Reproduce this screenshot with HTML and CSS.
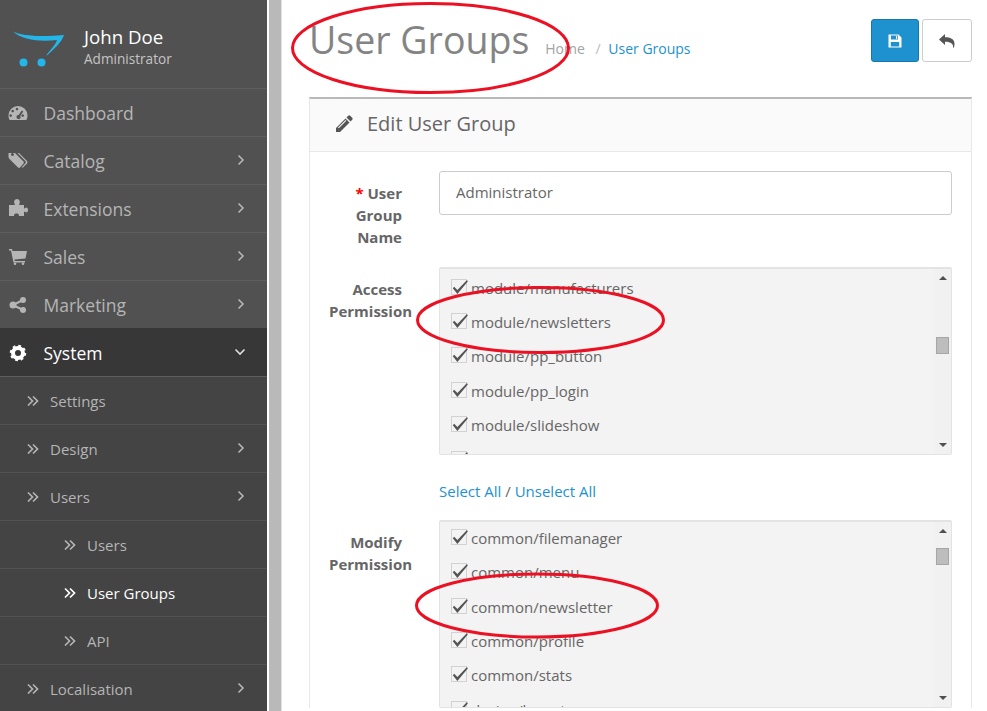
FILE: index.html
```html
<!DOCTYPE html>
<html lang="en">
<head>
    <meta charset="UTF-8">
    <title>User Groups</title>
    <link rel="stylesheet" href="styles.css">
</head>
<body>
    <svg class="sprites" width="0" height="0">
        <symbol id="chev-right" viewBox="0 0 10 12"><path d="M2.5 1.5 7 6l-4.5 4.5" fill="none" stroke="currentColor" stroke-width="1.6"/></symbol>
        <symbol id="chev-down" viewBox="0 0 12 10"><path d="M1.5 2.5 6 7l4.5-4.5" fill="none" stroke="currentColor" stroke-width="1.6"/></symbol>
        <symbol id="angles" viewBox="0 0 12 12"><path d="M1 1.5 5.500 6 1 10.500M6 1.500 10.500 6 6 10.500" fill="none" stroke="currentColor" stroke-width="1.7"/></symbol>
        <symbol id="tick" viewBox="0 -2 18 18" overflow="visible"><path d="M1.800 7.200 3.200 5.800 6.400 9 16-1 16.800.5 6.400 13z" fill="#555"/></symbol>
    </svg>

    <div class="page">
        <aside class="sidebar">
            <div class="profile">
                <svg class="logo" width="52" height="40" viewBox="12 28 52 40">
                    <path d="M13 31.500C22 36 40 37 64 35 62 42 54 49 47 55.500L46.500 55C51 49 56 44 57 40 40 42 22 40 13 31.500Z" fill="#23b6ea"/>
                    <circle cx="23.500" cy="62.500" r="4" fill="#23b6ea"/>
                    <circle cx="41.500" cy="62.500" r="4" fill="#23b6ea"/>
                </svg>
                <div>
                    <div class="profile-name">John Doe</div>
                    <div class="profile-role">Administrator</div>
                </div>
            </div>
            <nav>
                <a class="nav-item">
                    <svg class="nav-icon" viewBox="0 0 20 16"><path fill-rule="evenodd" d="M10 1a9.500 9.500 0 0 1 9.500 9.500c0 1.800-.4 3.500-1.300 4.500H1.800C.9 14 .5 12.300.5 10.500A9.500 9.500 0 0 1 10 1zM4 10.500a1.300 1.300 0 1 0 0 .1zM6 6a1.300 1.300 0 1 0 0 .1zM10.300 4a1.300 1.300 0 1 0 0 .1zM16 10.500a1.300 1.300 0 1 0 0 .1zM15.300 6.500 13.800 5.500 10.600 10a2 2 0 1 0 1.600 1z" fill="currentColor"/></svg>
                    <span>Dashboard</span>
                </a>
                <a class="nav-item">
                    <svg class="nav-icon" viewBox="0 0 20 16"><path fill-rule="evenodd" d="M.5 0h6.500l8.500 8.500a1.500 1.500 0 0 1 0 2L12 14.500a1.500 1.500 0 0 1-2 0L1.500 6C.8 5.300.5 4.500.5 3.700zM4.500 3a1.500 1.500 0 1 0-.1 0z" fill="currentColor"/><path d="M9.500 0h1.500l8 8a2 2 0 0 1 0 2.500L15 14.500h-1.500l4-4.500c.5-.6.5-1.200 0-1.700z" fill="currentColor"/></svg>
                    <span>Catalog</span>
                    <svg class="nav-arrow"><use href="#chev-right"/></svg>
                </a>
                <a class="nav-item">
                    <svg class="nav-icon" viewBox="0 0 20 16"><path d="M1 4H6.500C7 4 7 3 6.500 2.500 5.500 1 6.500-2 9-2s3.500 3 2.500 4.500C11 3 11 4 11.500 4H16V7C16 7.500 17 7.500 17.500 7 18 6 20 6.500 20 9s-2 3-2.500 2C17 10.500 16 10.500 16 11v4H11C11 13 10 12.500 8.500 12.500S6 13 6 15H1z" fill="currentColor"/></svg>
                    <span>Extensions</span>
                    <svg class="nav-arrow"><use href="#chev-right"/></svg>
                </a>
                <a class="nav-item">
                    <svg class="nav-icon" viewBox="0 0 20 16"><path d="M1 0h3l.5 2H19l-1.500 7.500-11 1 .3 1.500H17v1.500H5.500L3 1.500H1z" fill="currentColor"/><circle cx="7" cy="14.700" r="1.300" fill="currentColor"/><circle cx="15" cy="14.700" r="1.300" fill="currentColor"/></svg>
                    <span>Sales</span>
                    <svg class="nav-arrow"><use href="#chev-right"/></svg>
                </a>
                <a class="nav-item">
                    <svg class="nav-icon" viewBox="0 0 20 16"><circle cx="5" cy="8" r="3.500" fill="currentColor"/><circle cx="15" cy="3" r="3" fill="currentColor"/><circle cx="15" cy="13" r="3" fill="currentColor"/><path d="M5 8 15 3M5 8l10 5" stroke="currentColor" stroke-width="2"/></svg>
                    <span>Marketing</span>
                    <svg class="nav-arrow"><use href="#chev-right"/></svg>
                </a>
                <a class="nav-item nav-open">
                    <svg class="nav-icon" viewBox="0 0 20 16"><circle cx="10" cy="8" r="5" fill="none" stroke="currentColor" stroke-width="4"/><circle cx="10" cy="8" r="7" fill="none" stroke="currentColor" stroke-width="2.500" stroke-dasharray="2.700 2.800"/></svg>
                    <span>System</span>
                    <svg class="nav-arrow nav-arrow-down"><use href="#chev-down"/></svg>
                </a>
                <a class="nav-sub">
                    <svg class="angles"><use href="#angles"/></svg>
                    <span>Settings</span>
                </a>
                <a class="nav-sub">
                    <svg class="angles"><use href="#angles"/></svg>
                    <span>Design</span>
                    <svg class="nav-arrow"><use href="#chev-right"/></svg>
                </a>
                <a class="nav-sub">
                    <svg class="angles"><use href="#angles"/></svg>
                    <span>Users</span>
                    <svg class="nav-arrow"><use href="#chev-right"/></svg>
                </a>
                <a class="nav-sub nav-deep">
                    <svg class="angles"><use href="#angles"/></svg>
                    <span>Users</span>
                </a>
                <a class="nav-sub nav-deep nav-current">
                    <svg class="angles"><use href="#angles"/></svg>
                    <span>User Groups</span>
                </a>
                <a class="nav-sub nav-deep">
                    <svg class="angles"><use href="#angles"/></svg>
                    <span>API</span>
                </a>
                <a class="nav-sub">
                    <svg class="angles"><use href="#angles"/></svg>
                    <span>Localisation</span>
                    <svg class="nav-arrow"><use href="#chev-right"/></svg>
                </a>
            </nav>
        </aside>

        <div class="gutter"></div>

        <main class="content">
            <header class="page-header">
                <h1>User Groups</h1>
                <div class="breadcrumb">
                    <a class="crumb-home">Home</a>
                    <span class="crumb-sep">/</span>
                    <a class="link">User Groups</a>
                </div>
                <div class="actions">
                    <button class="btn btn-save">
                        <svg width="14" height="14" viewBox="0 0 14 14"><path fill-rule="evenodd" d="M.5.500h10L13.500 3.500v10H.500zM3 1.500v4h7v-4zM8 2h1.200v3H8zM2.800 8v4.500h8.400V8z" fill="#fff"/></svg>
                    </button>
                    <button class="btn btn-back">
                        <svg width="16" height="14" viewBox="0 0 16 14"><path d="M0 5.500 6 0v3.300c5 0 9.500 1.500 9.500 7 0 1.300-.3 2.500-.8 3.500h-.6c.4-3.500-1.800-6-8.100-6V11z" fill="#555"/></svg>
                    </button>
                </div>
            </header>

            <section class="panel">
                <div class="panel-heading">
                    <svg width="18" height="18" viewBox="0 0 18 18"><path d="M13.200.8a1.500 1.500 0 0 1 2 0l2 2a1.500 1.500 0 0 1 0 2L15.500 6.500l-4-4zM10.500 3.500l4 4L5 17H1v-4zM3 12.500l.8.800 7.500-7.500-.8-.8z" fill="#555" fill-rule="evenodd"/></svg>
                    <h3>Edit User Group</h3>
                </div>
                <div class="panel-body">
                    <div class="form-row">
                        <label class="form-label">
                            <span class="label-line"><span class="required">*</span> User</span>
                            <span class="label-line">Group</span>
                            <span class="label-line">Name</span>
                        </label>
                        <div class="form-control">Administrator</div>
                    </div>

                    <div class="form-row">
                        <label class="form-label">
                            <span class="label-line">Access</span>
                            <span>Permission</span>
                        </label>
                        <div class="field">
                            <div class="well">
                                <ul class="perm-list perm-access">
                                    <li><span class="check"><svg width="18" height="18"><use href="#tick"/></svg></span>module/manufacturers</li>
                                    <li><span class="check"><svg width="18" height="18"><use href="#tick"/></svg></span>module/newsletters</li>
                                    <li><span class="check"><svg width="18" height="18"><use href="#tick"/></svg></span>module/pp_button</li>
                                    <li><span class="check"><svg width="18" height="18"><use href="#tick"/></svg></span>module/pp_login</li>
                                    <li><span class="check"><svg width="18" height="18"><use href="#tick"/></svg></span>module/slideshow</li>
                                    <li><span class="check"><svg width="18" height="18"><use href="#tick"/></svg></span>module/special</li>
                                </ul>
                                <div class="scrollbar">
                                    <i class="arrow-up"></i>
                                    <i class="thumb thumb-access"></i>
                                    <i class="arrow-down"></i>
                                </div>
                            </div>
                            <div class="select-links"><a class="link">Select All</a> / <a class="link">Unselect All</a></div>
                        </div>
                    </div>

                    <div class="form-row">
                        <label class="form-label">
                            <span class="label-line">Modify</span>
                            <span>Permission</span>
                        </label>
                        <div class="field">
                            <div class="well">
                                <ul class="perm-list perm-modify">
                                    <li><span class="check"><svg width="18" height="18"><use href="#tick"/></svg></span>common/filemanager</li>
                                    <li><span class="check"><svg width="18" height="18"><use href="#tick"/></svg></span>common/menu</li>
                                    <li><span class="check"><svg width="18" height="18"><use href="#tick"/></svg></span>common/newsletter</li>
                                    <li><span class="check"><svg width="18" height="18"><use href="#tick"/></svg></span>common/profile</li>
                                    <li><span class="check"><svg width="18" height="18"><use href="#tick"/></svg></span>common/stats</li>
                                    <li><span class="check"><svg width="18" height="18"><use href="#tick"/></svg></span>design/layout</li>
                                </ul>
                                <div class="scrollbar">
                                    <i class="arrow-up"></i>
                                    <i class="thumb thumb-modify"></i>
                                    <i class="arrow-down"></i>
                                </div>
                            </div>
                        </div>
                    </div>
                </div>
            </section>
        </main>
    </div>

    <!-- red marks drawn over the screenshot -->
    <svg class="marks" width="987" height="711" viewBox="0 0 987 711">
        <ellipse cx="430.500" cy="48" rx="138" ry="44.500"/>
        <ellipse cx="540.500" cy="320" rx="123" ry="32.500"/>
        <ellipse cx="537" cy="605.500" rx="120.500" ry="31.500"/>
    </svg>
</body>
</html>
```

FILE: styles.css
```css
body {
    margin: 0;
    height: 711px;
    overflow: hidden;
    position: relative;
    background-color: #fff;
    font-family: "Open Sans", sans-serif;
    font-size: 15px;
    color: #666;
}

.sprites {
    display: block;
    height: 0;
}

.page {
    display: flex;
    height: 711px;
}

/* sidebar */
.sidebar {
    width: 267px;
    flex: none;
    background-color: #515151;
    color: #b5b5b5;
}

.profile {
    height: 88px;
    box-sizing: border-box;
    padding: 25px 0 0 12px;
    display: flex;
    gap: 20px;
}

.logo {
    margin-top: 3px;
}

.profile-name {
    font-size: 18.7px;
    line-height: 24px;
    color: #fff;
}

.profile-role {
    font-size: 13.6px;
    line-height: 20px;
    color: #c4c4c4;
}

.nav-item,
.nav-sub {
    display: flex;
    align-items: center;
    height: 47px;
    border-top: 1px solid #5e5e5e;
}

.nav-item {
    padding-left: 8px;
    font-size: 17.5px;
}

.nav-icon {
    width: 20px;
    height: 16px;
    margin-right: 15.500px;
    flex: none;
    overflow: visible;
}

.nav-arrow {
    width: 10px;
    height: 12px;
    margin-left: auto;
    margin-right: 21px;
    position: relative;
    top: -1px;
}

.nav-arrow-down {
    width: 12px;
    height: 10px;
    margin-right: 21px;
}

.nav-open {
    background-color: #373737;
    color: #fff;
    border-top-color: #373737;
}

.nav-open .nav-arrow {
    color: #ddd;
}

.nav-sub {
    padding-left: 27px;
    font-size: 15px;
    background-color: #444;
    border-top-color: #525252;
}

.nav-open + .nav-sub {
    border-top-color: #5e5e5e;
}

.nav-deep {
    padding-left: 64px;
}

.angles {
    width: 12px;
    height: 12px;
    margin-right: 11px;
    flex: none;
}

.nav-current {
    color: #fff;
}

/* strip between sidebar and page */
.gutter {
    width: 12px;
    flex: none;
    margin-left: 2px;
    background-color: #b9b9b9;
    border-right: 1px solid #e2e2e2;
}

/* content */
.content {
    flex: 1;
    min-width: 0;
    padding: 0 15px 0 27px;
}

.page-header {
    height: 97px;
    box-sizing: border-box;
    display: flex;
    align-items: flex-start;
}

h1 {
    margin: 15px 0 0;
    font-size: 37.500px;
    line-height: 50px;
    font-weight: 400;
    color: #848484;
}

.breadcrumb {
    margin: 38px 0 0 16px;
    line-height: 22px;
    font-size: 14px;
}

.crumb-home {
    color: #a3a3a3;
}

.crumb-sep {
    margin: 0 4px 0 7px;
    color: #bbb;
}

.link {
    color: #1e91cf;
}

.actions {
    margin: 19px 0 0 auto;
    display: flex;
    gap: 3px;
}

.btn {
    height: 43px;
    padding: 0;
    border-radius: 3px;
    display: flex;
    align-items: center;
    justify-content: center;
}

.btn-save {
    width: 48px;
    background-color: #1e91cf;
    border: 1px solid #1978ab;
}

.btn-back {
    width: 50px;
    background-color: #fff;
    border: 1px solid #ccc;
}

.panel {
    border-top: 2px solid #b9b9b9;
    border-left: 1px solid #e8e8e8;
    border-right: 1px solid #e8e8e8;
}

.panel-heading {
    height: 53px;
    box-sizing: border-box;
    padding: 0 0 2px 25px;
    display: flex;
    align-items: center;
    gap: 14px;
    background-color: #fafafa;
    border-bottom: 1px solid #e8e8e8;
}

.panel-heading h3 {
    margin: 0 0 2px;
    font-size: 20px;
    font-weight: 400;
    color: #666;
}

.panel-body {
    padding: 19px 19px 0 19px;
}

.form-row {
    display: flex;
    margin-bottom: 19px;
}

.form-label {
    width: 83px;
    flex: none;
    margin-right: 27px;
    padding-top: 11px;
    line-height: 22px;
    text-align: right;
    font-weight: 700;
}

.label-line {
    display: block;
    padding-right: 10px;
}

.required {
    color: #f00;
}

.form-control {
    flex: 1;
    height: 44px;
    box-sizing: border-box;
    padding: 0 16px;
    line-height: 41px;
    border: 1px solid #ccc;
    border-radius: 3px;
}

.field {
    flex: 1;
    min-width: 0;
}

.well {
    height: 188px;
    box-sizing: border-box;
    display: flex;
    overflow: hidden;
    background-color: #f3f3f3;
    border: 1px solid #e3e3e3;
    border-top-width: 2px;
    border-radius: 2px;
}

.perm-list {
    flex: 1;
    margin: 0;
    padding: 0 0 0 11px;
    list-style: none;
}

.perm-access {
    margin-top: 1.500px;
}

.perm-modify {
    margin-top: -1.400px;
}

.perm-list li {
    height: 34.400px;
    line-height: 38px;
    display: flex;
    align-items: center;
    white-space: nowrap;
}

.check {
    width: 16px;
    height: 16px;
    box-sizing: border-box;
    flex: none;
    margin: -2px 4px 0 0;
    border: 1px solid #d2d2d2;
    background-color: #f3f3f3;
}

.check svg {
    display: block;
    margin: -1px;
    overflow: visible;
}

.scrollbar {
    width: 17px;
    flex: none;
    padding: 7px 0;
    box-sizing: border-box;
    display: flex;
    flex-direction: column;
    align-items: center;
    background-color: #f1f1f1;
}

.scrollbar i {
    display: block;
    flex: none;
}

.arrow-up,
.arrow-down {
    width: 0;
    height: 0;
    border-left: 4px solid transparent;
    border-right: 4px solid transparent;
}

.arrow-up {
    border-bottom: 4px solid #505050;
}

.arrow-down {
    border-top: 4px solid #505050;
    margin-top: auto;
}

.thumb {
    width: 13px;
    height: 17px;
    box-sizing: border-box;
    background-color: #bdbdbd;
    border: 1px solid #a6a6a6;
}

.thumb-access {
    margin-top: 57px;
}

.thumb-modify {
    margin-top: 15px;
}

.select-links {
    margin-top: 25px;
    margin-bottom: -1px;
    line-height: 22px;
}

/* annotation layer */
.marks {
    position: absolute;
    left: 0;
    top: 0;
    fill: none;
    stroke: #ec1023;
    stroke-width: 3;
    pointer-events: none;
}
```
